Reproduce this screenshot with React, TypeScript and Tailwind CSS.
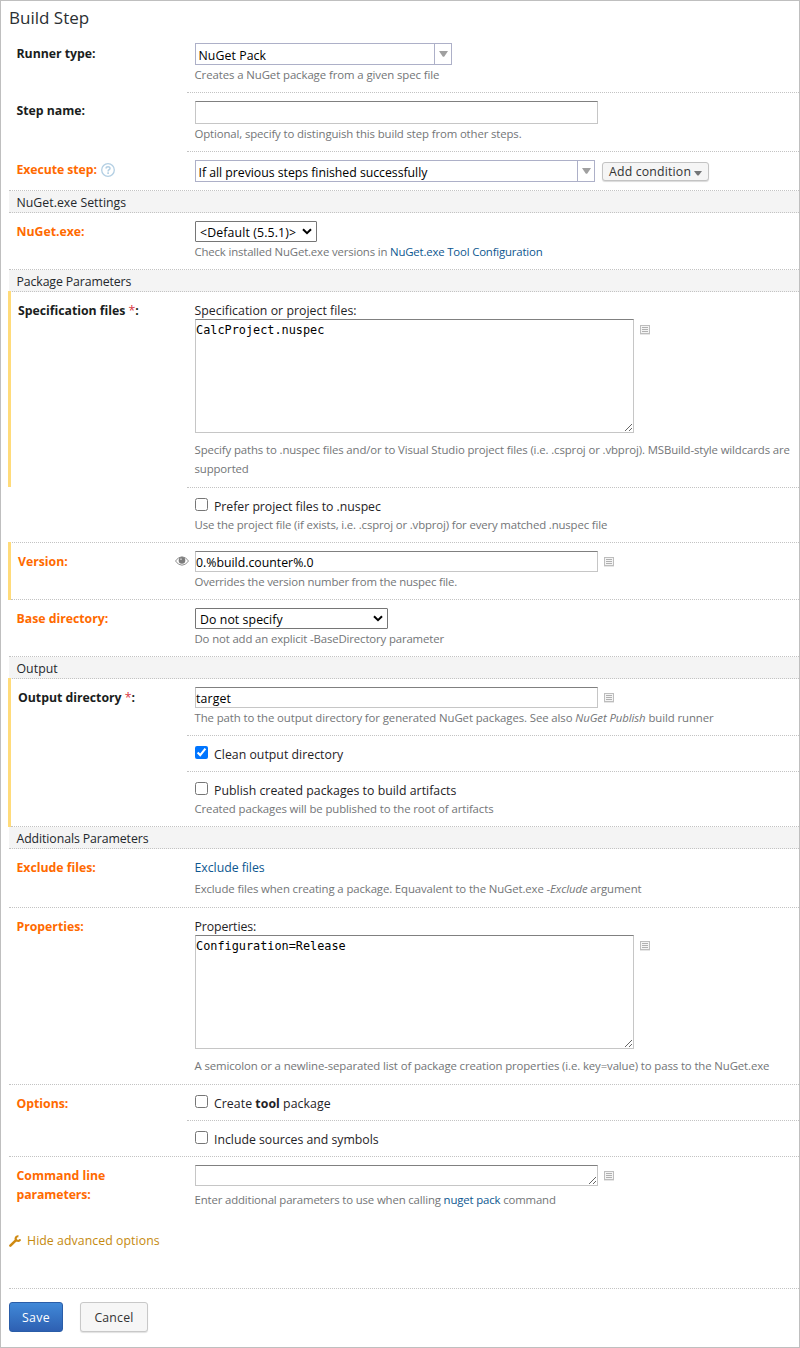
import React, { type ReactNode } from "react";

const LINE = "border-dotted border-[#c3c3c3]";

function Section({ children }: { children: ReactNode }) {
  return (
    <h2 className="h-[22px] border-b border-dotted border-[#c3c3c3] bg-[#f4f4f4] pl-[7.5px] pt-px leading-[22px] text-[#24282c]">
      {children}
    </h2>
  );
}

function Label({ children, advanced, className = "pt-[9px]" }: { children?: ReactNode; advanced?: boolean; className?: string }) {
  return (
    <div
      className={`w-[178px] shrink-0 pl-[7.5px] font-bold leading-[19px] tracking-[-0.02px] ${className} ${
        advanced ? "text-[#ff6a00]" : "text-[#1a1d20]"
      }`}
    >
      {children}
    </div>
  );
}

function Row({
  label,
  height,
  line = "full",
  children,
}: {
  label: ReactNode;
  height: string;
  line?: "full" | "field" | "none";
  children: ReactNode;
}) {
  return (
    <div className={`flex ${height} ${line === "full" ? `border-b ${LINE}` : ""}`}>
      {label}
      <div className={`flex min-w-0 flex-1 flex-col pl-2 pt-2 ${line === "field" ? `border-b ${LINE}` : ""}`}>
        {children}
      </div>
    </div>
  );
}

function Modified({ children, className = "" }: { children: ReactNode; className?: string }) {
  return <div className={`-ml-px -mt-px border-l-[3px] border-[#ffdb7a] pt-px ${className}`}>{children}</div>;
}

function ModifiedLabel({ children }: { children: ReactNode }) {
  return <div className="-ml-[0.5px] w-[176.5px] shrink-0">{children}</div>;
}

function Help({ children, className }: { children: ReactNode; className: string }) {
  return (
    <p className={`-ml-[0.5px] whitespace-nowrap text-[11.4px] leading-[18px] text-[#737577] ${className}`}>{children}</p>
  );
}

function Link({ children, className = "" }: { children: ReactNode; className?: string }) {
  return <a className={`text-[#0d5790] ${className}`}>{children}</a>;
}

function Combo({ children, className }: { children: ReactNode; className: string }) {
  return (
    <div className={`flex h-[22px] border border-[#adb0c8] bg-white text-black ${className}`}>
      <span className="flex-1 pl-[2.5px] pt-px leading-[22px]">{children}</span>
      <span className="flex w-[17px] items-center justify-center border-l border-[#adb0c8]">
        <svg width="9" height="6" viewBox="0 0 9 6">
          <path d="M0 0h9L5.5 5.2q-1 1-2 0z" fill="#a0a0a0" />
        </svg>
      </span>
    </div>
  );
}

function Select({ children, className }: { children: ReactNode; className: string }) {
  return (
    <div
      className={`flex h-[21px] items-center justify-between rounded-[1px] border border-[#767676] bg-white pl-1 pr-1 text-black ${className}`}
    >
      <span className="pt-px leading-[19px]">{children}</span>
      <svg width="10" height="7" viewBox="0 0 10 7" fill="none">
        <path d="M1 1.2l4 4 4-4" stroke="#000" strokeWidth="2" />
      </svg>
    </div>
  );
}

function ParamIcon() {
  return (
    <svg width="10" height="10" viewBox="0 0 10 10" shapeRendering="crispEdges" className="ml-[6px] mt-[6px] shrink-0">
      <path d="M0.5 0.5h9v8h-9z" fill="#f4f4f4" stroke="#bdbdbd" />
      <path d="M2 2.5h6M2 4.5h6M2 6.5h6" stroke="#b0b0b0" />
      <path d="M0 9.5h10" stroke="#e6e6e6" />
    </svg>
  );
}

const FIELD = "block border border-[#c6c6c6] border-t-[#808080] bg-white text-black outline-none";

function TextInput({ value, className }: { value: string; className: string }) {
  return <input type="text" defaultValue={value} className={`${FIELD} w-[403px] pt-[2px] ${className}`} />;
}

function Area({ value, className }: { value: string; className: string }) {
  return (
    <textarea
      defaultValue={value}
      className={`${FIELD} resize font-['DejaVu_Sans_Mono',monospace] text-[11.85px] leading-[15px] ${className}`}
    />
  );
}

function Check({ checked, children }: { checked?: boolean; children: ReactNode }) {
  return (
    <label className="flex h-5 items-start text-[#1f2326]">
      <input type="checkbox" defaultChecked={checked} className="mt-[2px] size-[13px]" />
      <span className="ml-[6px] mt-px leading-[19px]">{children}</span>
    </label>
  );
}

function EyeIcon() {
  return (
    <svg width="14" height="10" viewBox="0 0 14 10" className="mt-[13px] shrink-0">
      <path d="M0.5 5Q3.2 0.8 7 0.8T13.5 5Q10.8 9.2 7 9.2T0.5 5z" fill="#fff" stroke="#8d8d8d" />
      <circle cx="7" cy="4.4" r="3.3" fill="#7c7c7c" />
      <circle cx="6" cy="3.2" r="0.9" fill="#c9c9c9" />
    </svg>
  );
}

export default function App() {
  return (
    <div className="flex h-[1348px] w-[800px] flex-col border border-[#bfbfbf] bg-white pl-2 pt-[5px] font-['Open_Sans',sans-serif] text-[12.3px] text-[#1f2326]">
      <h1 className="mb-[5px] h-6 text-[17px] leading-6 text-[#2b2f33]">Build Step</h1>

      <Row height="h-[58px]" line="field" label={<Label>Runner type:</Label>}>
        <Combo className="w-[257px] tracking-[0.08px]">NuGet Pack</Combo>
        <Help className="mt-px tracking-[-0.09px]">Creates a NuGet package from a given spec file</Help>
      </Row>

      <Row height="h-[59px]" line="field" label={<Label className="pt-2">Step name:</Label>}>
        <TextInput value="" className="h-[23px]" />
        <Help className="mt-px tracking-[-0.13px]">
          Optional, specify to distinguish this build step from other steps.
        </Help>
      </Row>

      <Row
        height="h-[39px]"
        label={
          <Label advanced className="pt-2">
            <span className="flex items-center gap-1">
              <span className="tracking-[-0.08px]">Execute step:</span>
              <svg width="14" height="14" viewBox="0 0 14 14" fill="none" stroke="#b3cfe3">
                <circle cx="7" cy="7" r="6.3" strokeWidth="1.3" />
                <path d="M5.1 5.5C5.1 3.3 9 3.3 9 5.4 9 6.7 7.1 6.7 7.1 8.4" strokeWidth="1.5" />
                <path d="M7.1 9.3v1.6" strokeWidth="1.6" />
              </svg>
            </span>
          </Label>
        }
      >
        <div className="flex">
          <Combo className="w-[400px] tracking-[-0.03px]">If all previous steps finished successfully</Combo>
          <button className="ml-[7px] mt-[2px] flex h-[19px] w-[107px] items-center rounded-[3px] border border-[#c3c3c3] bg-[#f5f5f5] pl-[6px] tracking-[0.17px] text-[#333] shadow-[0_1px_1px_rgba(0,0,0,0.15)]">
            <span className="pt-[2px]">Add condition</span>
            <svg width="8" height="5" viewBox="0 0 8 5" className="ml-[3px] mt-[3px]">
              <path d="M0 0h8L4.8 4.2q-.8.8-1.6 0z" fill="#737577" />
            </svg>
          </button>
        </div>
      </Row>

      <Section>
        <span className="tracking-[0.02px]">NuGet.exe Settings</span>
      </Section>
      <Row height="h-[57px]" label={<Label advanced>NuGet.exe:</Label>}>
        <Select className="w-[122px] tracking-[0.13px]">&lt;Default (5.5.1)&gt;</Select>
        <Help className="mt-px tracking-[-0.165px]">
          Check installed NuGet.exe versions in <Link className="tracking-[-0.18px]">NuGet.exe Tool Configuration</Link>
        </Help>
      </Row>

      <Section>
        <span className="tracking-[-0.11px]">Package Parameters</span>
      </Section>
      <Modified className="mb-px h-[196px]">
        <Row
          height="h-[196px]"
          line="field"
          label={
            <ModifiedLabel>
              <Label>
                Specification files <span className="font-normal text-[#d9363e]">*</span>:
              </Label>
            </ModifiedLabel>
          }
        >
          <p className="-ml-[0.5px] mt-px h-[18px] leading-[20px] tracking-[0.03px]">Specification or project files:</p>
          <div className="flex">
            <Area value="CalcProject.nuspec" className="h-[114px] w-[439px] pt-[3px]" />
            <ParamIcon />
          </div>
          <Help className="mt-[7px] leading-[19px]! tracking-[-0.12px]">
            Specify paths to .nuspec files and/or to Visual Studio project files (i.e. .csproj or .vbproj). MSBuild-style
            wildcards are
            <br />
            supported
          </Help>
        </Row>
      </Modified>
      <Row height="h-[55px]" label={<Label />}>
        <Check>
          <span className="tracking-[-0.03px]">Prefer project files to .nuspec</span>
        </Check>
        <Help className="tracking-[-0.15px]">
          Use the project file (if exists, i.e. .csproj or .vbproj) for every matched .nuspec file
        </Help>
      </Row>

      <Modified>
        <Row
          height="h-[57px]"
          label={
            <ModifiedLabel>
              <div className="flex w-[177.5px]">
                <div className="w-[164.5px] shrink-0">
                  <Label advanced className="w-auto! pt-[9px]">
                    Version:
                  </Label>
                </div>
                <EyeIcon />
              </div>
            </ModifiedLabel>
          }
        >
          <div className="flex">
            <TextInput value="0.%build.counter%.0" className="h-[21px]" />
            <ParamIcon />
          </div>
          <Help className="mt-px tracking-[-0.19px]">Overrides the version number from the nuspec file.</Help>
        </Row>
      </Modified>
      <Row height="h-[57px]" label={<Label advanced>Base directory:</Label>}>
        <Select className="w-[193px] tracking-[0.08px]">Do not specify</Select>
        <Help className="mt-px tracking-[-0.145px]">Do not add an explicit -BaseDirectory parameter</Help>
      </Row>

      <Section>
        <span className="tracking-[0.05px]">Output</span>
      </Section>
      <Modified>
        <div className="flex border-b border-dotted border-[#c3c3c3]">
          <ModifiedLabel>
            <Label>
              Output directory <span className="font-normal text-[#d9363e]">*</span>:
            </Label>
          </ModifiedLabel>
          <div className="flex-1">
            <div className="h-[57px] border-b border-dotted border-[#c3c3c3] pl-2 pt-2">
              <div className="flex">
                <TextInput value="target" className="h-[21px] tracking-[0.15px]" />
                <ParamIcon />
              </div>
              <Help className="mt-px tracking-[-0.1px]">
                The path to the output directory for generated NuGet packages. See also <em>NuGet Publish</em> build
                runner
              </Help>
            </div>
            <div className="h-9 border-b border-dotted border-[#c3c3c3] pl-2 pt-2">
              <Check checked>
                <span className="tracking-[0.02px]">Clean output directory</span>
              </Check>
            </div>
            <div className="h-[54px] pl-2 pt-2">
              <Check>
                <span className="tracking-[0.02px]">Publish created packages to build artifacts</span>
              </Check>
              <Help className="tracking-[-0.11px]">Created packages will be published to the root of artifacts</Help>
            </div>
          </div>
        </div>
      </Modified>

      <Section>
        <span className="tracking-[-0.09px]">Additionals Parameters</span>
      </Section>
      <Row height="h-[59px]" label={<Label advanced>Exclude files:</Label>}>
        <p className="-ml-[0.5px] mt-px h-5 leading-[19px]">
          <Link className="tracking-[-0.03px]">Exclude files</Link>
        </p>
        <Help className="mt-[2px] tracking-[-0.125px]">
          Exclude files when creating a package. Equavalent to the NuGet.exe -<em>Exclude</em> argument
        </Help>
      </Row>
      <Row height="h-[177px]" label={<Label advanced>Properties:</Label>}>
        <p className="-ml-[0.5px] mt-px h-[18px] leading-[20px] tracking-[-0.11px]">Properties:</p>
        <div className="flex">
          <Area value="Configuration=Release" className="h-[114px] w-[439px] pt-[3px]" />
          <ParamIcon />
        </div>
        <Help className="mt-2 tracking-[-0.117px]">
          A semicolon or a newline-separated list of package creation properties (i.e. key=value) to pass to the
          NuGet.exe
        </Help>
      </Row>
      <Row height="h-9" line="field" label={<Label advanced>Options:</Label>}>
        <Check>
          <span className="tracking-[0.05px]">
            Create <b className="font-bold">tool</b> package
          </span>
        </Check>
      </Row>
      <Row height="h-9" label={<Label />}>
        <Check>
          <span className="tracking-[-0.02px]">Include sources and symbols</span>
        </Check>
      </Row>
      <Row
        height="h-[64px]"
        line="none"
        label={
          <Label advanced>
            Command line
            <br />
            <span className="tracking-[-0.1px]">parameters:</span>
          </Label>
        }
      >
        <div className="flex">
          <Area value="" className="h-[21px] w-[403px]" />
          <ParamIcon />
        </div>
        <Help className="mt-[5px] tracking-[-0.155px]">
          Enter additional parameters to use when calling <Link>nuget pack</Link> command
        </Help>
      </Row>

      <div className="mt-[10px] flex h-[19px] items-center text-[#c58a0f]">
        <svg width="12" height="12" viewBox="0 0 12 12" fill="none" stroke="#cf8a12">
          <path d="M1.4 10.6L6.8 5.4" strokeWidth="2.6" strokeLinecap="round" />
          <path d="M9.4 1.3A2.3 2.3 0 1 0 11.2 4.2" strokeWidth="2.2" />
        </svg>
        <span className="ml-[6px] leading-[19px] tracking-[0.06px]">Hide advanced options</span>
      </div>

      <div className="mt-[38px] flex gap-[17px] border-t border-dotted border-[#c3c3c3] pt-[13px]">
        <button className="h-[30px] w-[54px] rounded-[3px] border border-[#2a5da8] bg-linear-to-b from-[#4189d8] to-[#2e60b2] pt-[2px] tracking-[0.4px] text-white">
          Save
        </button>
        <button className="h-[30px] w-[68px] rounded-[3px] border border-[#c8c8c8] bg-[#f6f6f6] pt-[2px] tracking-[0.2px] text-[#333] shadow-[0_1px_1px_rgba(0,0,0,0.12)]">
          Cancel
        </button>
      </div>
    </div>
  );
}
